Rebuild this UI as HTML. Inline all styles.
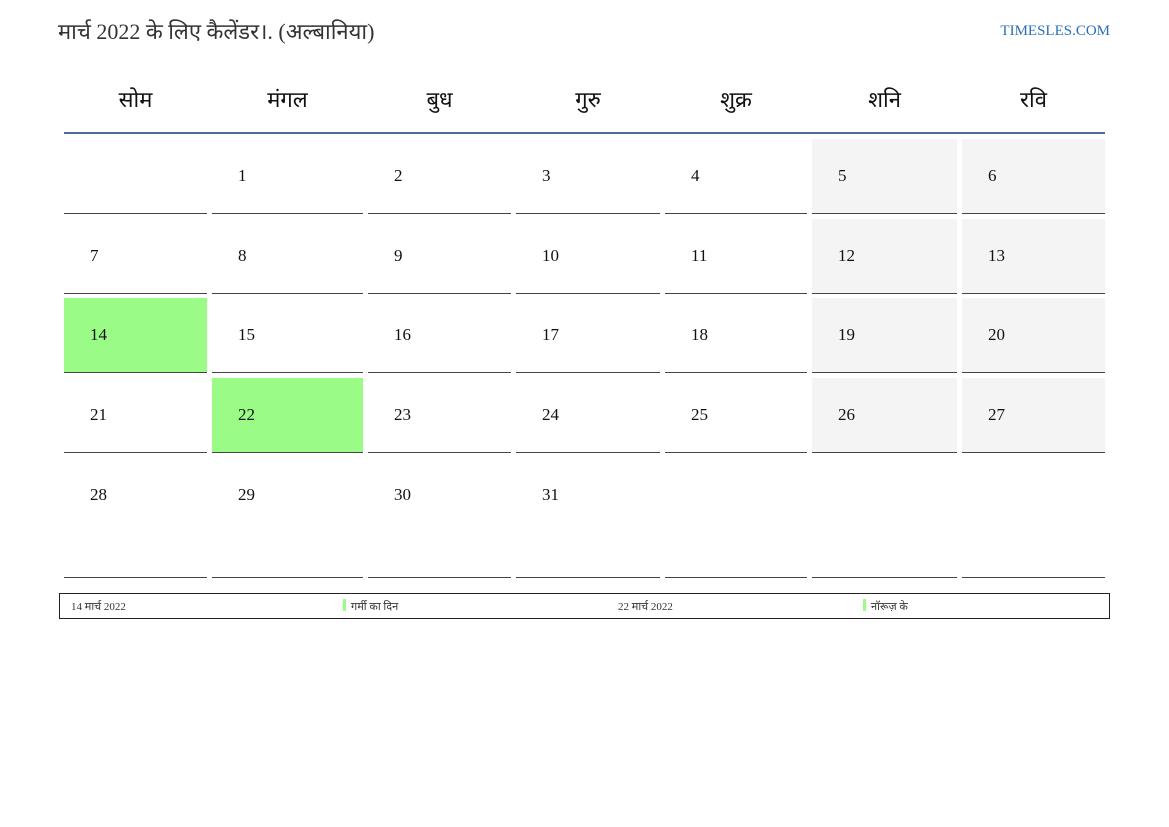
<!DOCTYPE html>
<html><head><meta charset="utf-8"><style>
body{margin:0;width:1169px;height:827px;background:#fff;position:relative;font-family:"Liberation Serif","Noto Serif CJK SC",serif;overflow:hidden}
.a{position:absolute}
.t{left:58px;top:16px;font-size:22px;color:#333;font-family:"Liberation Serif","Noto Sans CJK SC",serif}
.site{right:59px;top:23px;font-size:15px;color:#2a6ebb}
.h{top:84px;font-size:22px;text-align:center;color:#111;font-family:"Liberation Serif","Noto Sans CJK SC",serif}
.c{border-bottom:1px solid #444;box-sizing:border-box}
.n{font-size:17px;color:#111}
.box{left:59px;top:593px;width:1051px;height:26px;border:1px solid #222;box-sizing:border-box;font-size:11px;color:#333;font-family:"Liberation Serif","Noto Sans CJK SC",serif}
.box span{position:absolute;top:5px}
.bar{position:absolute;top:5px;width:3px;height:12px;background:#9afc87}
</style></head><body>
<div class="a t">मार्च 2022 के लिए कैलेंडर।. (अल्बानिया)</div>
<div class="a site">TIMESLES.COM</div>
<div id="g"></div>
<div class="a" style="left:64px;top:132px;width:1041px;height:2px;background:#4a6d96"></div>
<div class="a box"><span style="left:11px">14 मार्च 2022</span><div class="bar" style="left:283px"></div><span style="left:291px">गर्मी का दिन</span><span style="left:558px">22 मार्च 2022</span><div class="bar" style="left:803px"></div><span style="left:811px">नॉरूज़ के</span></div>
<script>
var cols=[[64,207],[212,363],[368,511],[516,660],[665,807],[812,957],[962,1105]];
var rows=[[139,214],[219,294],[298,373],[378,453],[458,578]];
var names=["सोम","मंगल","बुध","गुरु","शुक्र","शनि","रवि"];
var h="";
cols.forEach(function(c,i){h+='<div class="a h" style="left:'+c[0]+'px;width:'+(c[1]-c[0])+'px">'+names[i]+'</div>';});
var d=1-1; // first day Tuesday
for(var r=0;r<5;r++)for(var k=0;k<7;k++){
 var idx=r*7+k, day=idx; // idx0 = blank Monday
 var c=cols[k],rw=rows[r];
 var bg="transparent";
 var txt=(day>=1&&day<=31)?day:"";
 if(k>=5&&r<4)bg="#f4f4f4";
 if(day==14||day==22)bg="#9afc87";
 h+='<div class="a c" style="left:'+c[0]+'px;top:'+rw[0]+'px;width:'+(c[1]-c[0])+'px;height:'+(rw[1]-rw[0])+'px;background:'+bg+'"><span class="a n" style="left:26px;top:27px">'+txt+'</span></div>';
}
document.getElementById("g").innerHTML=h;
</script>
</body></html>
